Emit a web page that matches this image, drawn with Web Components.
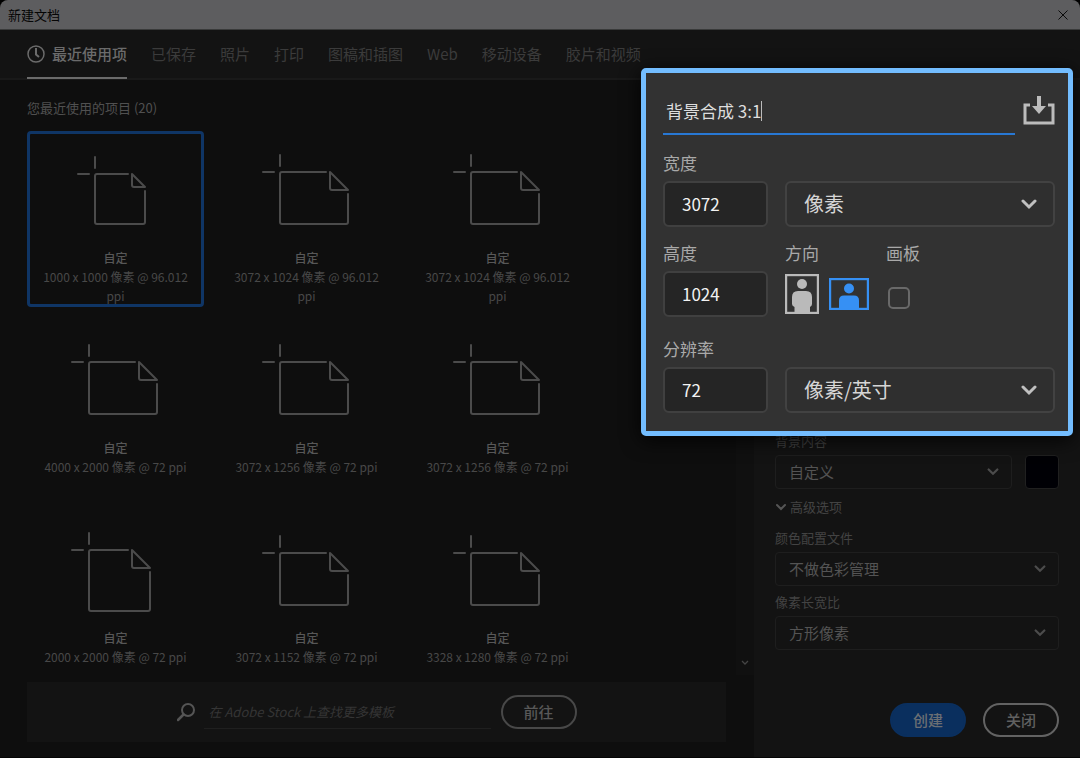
<!DOCTYPE html>
<html lang="zh-CN">
<head>
<meta charset="utf-8">
<meta name="viewport" content="width=device-width, initial-scale=1">
<title>新建文档</title>
<style>
html { background: #000; }
body { margin: 0; font-family: "Noto Sans CJK SC", "Noto Sans", sans-serif; font-size: 13px; line-height: 20px; color: #484848; }
</style>
</head>
<body>
<new-document-window></new-document-window>
<script>
const RESET = `
  *, *::before, *::after { box-sizing: border-box; }
  :host { display: block; box-sizing: border-box; }
  svg { display: block; flex: none; }
  button, input, select { font: inherit; color: inherit; margin: 0; border: 0; background: none; padding: 0; outline: 0; appearance: none; border-radius: 0; }
`;

class BaseElement extends HTMLElement {
  connectedCallback() {
    if (this.shadowRoot) return;
    this.attachShadow({ mode: 'open' }).innerHTML = `<style>${RESET}${this.styles()}</style>${this.markup()}`;
  }
  styles() { return ''; }
  markup() { return '<slot></slot>'; }
  attr(name) { return this.getAttribute(name) || ''; }
}

customElements.define('window-titlebar', class extends BaseElement {
  styles() { return `
    :host { display: flex; align-items: center; justify-content: space-between; height: 30px; padding: 0 12px 0 8px; background: #5d5d5f; border-bottom: 1px solid #393a3a; border-radius: 8px 8px 0 0; color: #050505; }
    h1 { margin: 0; font-size: 13px; font-weight: 400; line-height: 20px; }
  `; }
  markup() { return `
    <h1><slot></slot></h1>
    <button aria-label="关闭窗口"><svg width="10" height="10" viewBox="0 0 10 10" fill="none" stroke="#0b0b0b"><path d="M.5.5l9 9M9.5.5l-9 9"/></svg></button>
  `; }
});

customElements.define('category-tabs', class extends BaseElement {
  styles() { return `
    :host { background: #131313; border-bottom: 2px solid #191919; padding: 0 27px; }
    nav { display: flex; gap: 24px; height: 49px; margin-bottom: -1px; }
    button { display: flex; align-items: center; gap: 7px; border-bottom: 2px solid transparent; font-size: 15px; line-height: 22px; color: #3b3b3b; white-space: nowrap; }
    button.active { color: #6b6b6b; border-color: #6b6b6b; font-weight: 500; }
  `; }
  markup() {
    const rest = this.attr('items').split(',').map(t => `<button>${t}</button>`).join('');
    return `<nav aria-label="类别">
      <button class="active" aria-current="true"><svg width="18" height="18" viewBox="0 0 18 18" fill="none" stroke="currentColor" stroke-width="1.5"><circle cx="9" cy="9" r="8"/><path d="M9 3v6.5l3 2.5" stroke-width="2"/></svg>${this.attr('current')}</button>${rest}</nav>`;
  }
});

customElements.define('preset-card', class extends BaseElement {
  styles() { return `
    button { display: flex; flex-direction: column; align-items: center; width: 100%; height: 100%; border: 3px solid transparent; border-radius: 4px; padding: 17px 10px 0; font-size: 12px; line-height: 19px; text-align: center; }
    :host([selected]) button { border-color: #0f3565; }
    svg { margin-bottom: 15px; }
    strong { font-weight: 500; color: #575757; }
  `; }
  markup() {
    const [x, y, w, h, f] = (this.attr('shape') || '19 21 68 52 18').split(' ').map(Number);
    const r = x + w, b = y + h;
    return `<button aria-pressed="${this.hasAttribute('selected')}">
      <svg width="91" height="82" viewBox="0 0 91 82" fill="none" stroke="#4b4b4b" stroke-width="2" stroke-linecap="round" stroke-linejoin="round">
        <path d="M${x} ${y - 17}v11M${x - 17} ${y}h11M${r - f - 4} ${y}H${x + 2}q-2 0-2 2V${b - 2}q0 2 2 2H${r - 2}q2 0 2-2V${y + f + 4}"/>
        <path d="M${r - f} ${y}v${f - 2}q0 2 2 2h${f - 2}z"/>
      </svg>
      <strong>自定</strong><span><slot></slot></span></button>`;
  }
});

customElements.define('preset-browser', class extends BaseElement {
  styles() { return `
    :host { display: grid; grid-template-columns: minmax(0, 1fr) 18px; flex: 1; }
    section { padding: 18px 0 0 27px; }
    h2 { margin: 0 0 13px; font-size: 13px; line-height: 20px; font-weight: 400; color: #505050; }
    .grid { display: grid; grid-template-columns: repeat(3, 177px); grid-template-rows: 176px 176px auto; gap: 14px; }
    .track { display: flex; flex-direction: column; justify-content: flex-end; align-items: center; padding-bottom: 9px; background: #101010; }
  `; }
  markup() { return `
    <section><h2>您最近使用的项目 (20)</h2>
      <div class="grid">
        <preset-card selected shape="25 23 50 50 13">1000 x 1000 像素 @ 96.012 ppi</preset-card>
        <preset-card>3072 x 1024 像素 @ 96.012 ppi</preset-card>
        <preset-card>3072 x 1024 像素 @ 96.012 ppi</preset-card>
        <preset-card>4000 x 2000 像素 @ 72 ppi</preset-card>
        <preset-card>3072 x 1256 像素 @ 72 ppi</preset-card>
        <preset-card>3072 x 1256 像素 @ 72 ppi</preset-card>
        <preset-card shape="19 19 61 61 18">2000 x 2000 像素 @ 72 ppi</preset-card>
        <preset-card shape="19 22 68 52 18">3072 x 1152 像素 @ 72 ppi</preset-card>
        <preset-card shape="19 22 68 52 18">3328 x 1280 像素 @ 72 ppi</preset-card>
      </div>
    </section>
    <div class="track"><svg width="8" height="6" viewBox="0 0 8 6" fill="none" stroke="#444" stroke-width="1.3"><path d="M1 1l3 3 3-3"/></svg></div>
  `; }
});

customElements.define('pill-button', class extends BaseElement {
  styles() { return `
    button { display: block; width: 76px; height: 34px; border: 2px solid #484848; border-radius: 17px; font-size: 15px; line-height: 22px; font-weight: 500; color: #585858; }
    :host([variant="primary"]) button { background: #0a2f5e; border-color: #0a2f5e; color: #6b6e73; }
    :host([variant="bright"]) button { border-color: #636363; color: #606060; }
  `; }
  markup() { return '<button><slot></slot></button>'; }
});

customElements.define('stock-search', class extends BaseElement {
  styles() { return `
    :host { display: flex; align-items: center; justify-content: center; height: 60px; margin: 7px 28px 15px 27px; background: #131313; }
    label { display: flex; align-items: center; gap: 9px; margin-right: 10px; }
    input { width: 287px; height: 34px; border-bottom: 1px solid #1f1f1f; padding: 0 5px; font-size: 13px; font-style: italic; }
    input::placeholder { color: #353535; opacity: 1; }
  `; }
  markup() { return `
    <label><svg width="18" height="20" viewBox="0 0 18 20" fill="none" stroke="#555" stroke-width="2"><circle cx="11" cy="8" r="6"/><path d="M6.5 12.5L1 18" stroke-width="2.5" stroke-linecap="round"/></svg>
    <input type="search" aria-label="搜索模板" placeholder="在 Adobe Stock 上查找更多模板"></label>
    <pill-button>前往</pill-button>
  `; }
});

customElements.define('select-field', class extends BaseElement {
  styles() { return `
    label { display: block; margin-bottom: 4px; }
    .box { display: grid; align-items: center; }
    .box > * { grid-area: 1 / 1; }
    select { width: 100%; height: 34px; border: 1px solid #1e1e1e; border-radius: 4px; padding: 0 13px; font-size: 15px; line-height: 22px; color: #545454; }
    svg { justify-self: end; margin-right: 13px; pointer-events: none; color: #4c4c4c; }
    :host([large]) select { height: 46px; border: 2px solid #424242; border-radius: 6px; padding: 0 17px; font-size: 20px; line-height: 28px; color: #d6d6d6; background: #2f2f2f; }
    :host([large]) svg { width: 16px; height: 11px; margin-right: 18px; color: #c0c0c0; }
  `; }
  markup() {
    const label = this.attr('label');
    return `${label ? `<label for="s">${label}</label>` : ''}
      <div class="box"><select id="s" ${label ? '' : `aria-label="${this.attr('name')}"`}><option>${this.attr('value')}</option></select>
      <svg width="12" height="8" viewBox="0 0 16 11" fill="none" stroke="currentColor" stroke-width="3" stroke-linecap="round"><path d="M2 2l6 6 6-6"/></svg></div>`;
  }
});

customElements.define('number-field', class extends BaseElement {
  styles() { return `
    label { display: block; font-size: 17px; line-height: 24px; margin-bottom: 6px; color: #a9a9a9; }
    input { display: block; width: 100%; height: 46px; border: 2px solid #404040; border-radius: 6px; padding: 0 17px 2px; background: #252525; font-size: 17px; line-height: 24px; color: #f2f2f2; }
  `; }
  markup() { return `<label for="n">${this.attr('label')}</label><input id="n" type="text" inputmode="numeric" value="${this.attr('value')}">`; }
});

customElements.define('advanced-settings', class extends BaseElement {
  styles() { return `
    :host { display: flex; flex-direction: column; background: #131313; padding: 351px 21px 20px; color: #434343; }
    .background { display: flex; align-items: flex-end; gap: 13px; }
    .background select-field { flex: 1; }
    .swatch { width: 34px; height: 34px; border: 1px solid #202020; border-radius: 4px; background: #000005; }
    .toggle { display: flex; align-items: center; gap: 3px; align-self: flex-start; margin: 8px 0 11px; line-height: 20px; }
    .last { margin-top: 6px; }
    .actions { display: flex; justify-content: flex-end; gap: 17px; margin-top: auto; }
  `; }
  markup() { return `
    <div class="background"><select-field label="背景内容" value="自定义"></select-field><button class="swatch" aria-label="背景颜色"></button></div>
    <button class="toggle" aria-expanded="true"><svg width="12" height="8" viewBox="0 0 12 8" fill="none" stroke="#555" stroke-width="2" stroke-linecap="round"><path d="M2 2l4 4 4-4"/></svg>高级选项</button>
    <select-field label="颜色配置文件" value="不做色彩管理"></select-field>
    <select-field class="last" label="像素长宽比" value="方形像素"></select-field>
    <div class="actions"><pill-button variant="primary">创建</pill-button><pill-button variant="bright">关闭</pill-button></div>
  `; }
});

customElements.define('preset-details', class extends BaseElement {
  styles() { return `
    :host { background: #323232; border: 5px solid #73bdff; border-radius: 5px; padding: 15px 13px 18px 17px; box-shadow: 0 4px 20px rgba(0, 0, 0, .85); color: #a9a9a9; font-size: 17px; line-height: 24px; }
    .name { display: flex; align-items: center; gap: 8px; margin-bottom: 16px; }
    .title { display: flex; align-items: center; flex: 1; height: 47px; border-bottom: 2px solid #2878d4; padding-left: 3px; }
    .title input { field-sizing: content; color: #dedede; }
    .caret { width: 1px; height: 20px; background: #bbb; }
    .row { display: grid; grid-template-columns: 105px minmax(0, 1fr); gap: 17px; align-items: end; }
    .row + .row { margin-top: 14px; }
    .row.last { margin-top: 20px; }
    .options { display: grid; grid-template-columns: 101px 1fr; align-self: stretch; }
    .option { display: flex; flex-direction: column; gap: 6px; }
    .modes { display: flex; align-items: center; gap: 10px; height: 46px; }
    .check { width: 22px; height: 22px; border: 2px solid #696969; border-radius: 5px; margin: 16px 0 0 2px; display: block; }
  `; }
  markup() { return `
    <div class="name">
      <div class="title"><input type="text" aria-label="预设详细信息" value="背景合成 3:1"><span class="caret"></span></div>
      <button aria-label="保存文档预设"><svg width="32" height="32" viewBox="0 0 32 32"><path d="M7 9H2v18h28V9h-5" fill="none" stroke="#bcbcbc" stroke-width="3"/><path d="M14 0h4v10h5l-7 8-7-8h5z" fill="#bcbcbc"/></svg></button>
    </div>
    <div class="row"><number-field label="宽度" value="3072"></number-field><select-field large name="单位" value="像素"></select-field></div>
    <div class="row"><number-field label="高度" value="1024"></number-field>
      <div class="options">
        <div class="option"><span id="o">方向</span>
          <div class="modes" role="group" aria-labelledby="o">
            <button aria-label="纵向" aria-pressed="false"><svg width="34" height="40" viewBox="0 0 34 40" fill="#bababa"><rect x="1" y="1" width="32" height="38" fill="none" stroke="#bababa" stroke-width="2.4"/><circle cx="17" cy="10" r="5"/><path d="M13 17h8q6 0 6 6v7q0 2-2 3v6H9.500v-6Q7 32 7 30v-7q0-6 6-6z"/></svg></button>
            <button aria-label="横向" aria-pressed="true"><svg width="40" height="32" viewBox="0 0 40 32" fill="#3690f4"><rect x="1" y="1" width="38" height="30" fill="none" stroke="#3690f4" stroke-width="2.4"/><circle cx="20" cy="10.500" r="5"/><path d="M15 17.500h10q5 0 5 5V31H10v-8.500q0-5 5-5z"/></svg></button>
          </div>
        </div>
        <div class="option"><label for="a">画板</label><input class="check" id="a" type="checkbox"></div>
      </div>
    </div>
    <div class="row last"><number-field label="分辨率" value="72"></number-field><select-field large name="分辨率单位" value="像素/英寸"></select-field></div>
  `; }
});

customElements.define('new-document-window', class extends BaseElement {
  styles() { return `
    :host { display: flex; flex-direction: column; min-height: 100vh; position: relative; background: #0e0e0e; border-bottom: 1px solid #050505; border-radius: 8px 8px 0 0; }
    main { flex: 1; display: grid; grid-template-columns: minmax(0, 1fr) 326px; }
    .browse { display: flex; flex-direction: column; }
    preset-details { position: absolute; top: 68px; right: 7px; width: 432px; }
  `; }
  markup() { return `
    <window-titlebar>新建文档</window-titlebar>
    <category-tabs current="最近使用项" items="已保存,照片,打印,图稿和插图,Web,移动设备,胶片和视频"></category-tabs>
    <main>
      <div class="browse"><preset-browser></preset-browser><stock-search></stock-search></div>
      <advanced-settings></advanced-settings>
    </main>
    <preset-details></preset-details>
  `; }
});
</script>
</body>
</html>
